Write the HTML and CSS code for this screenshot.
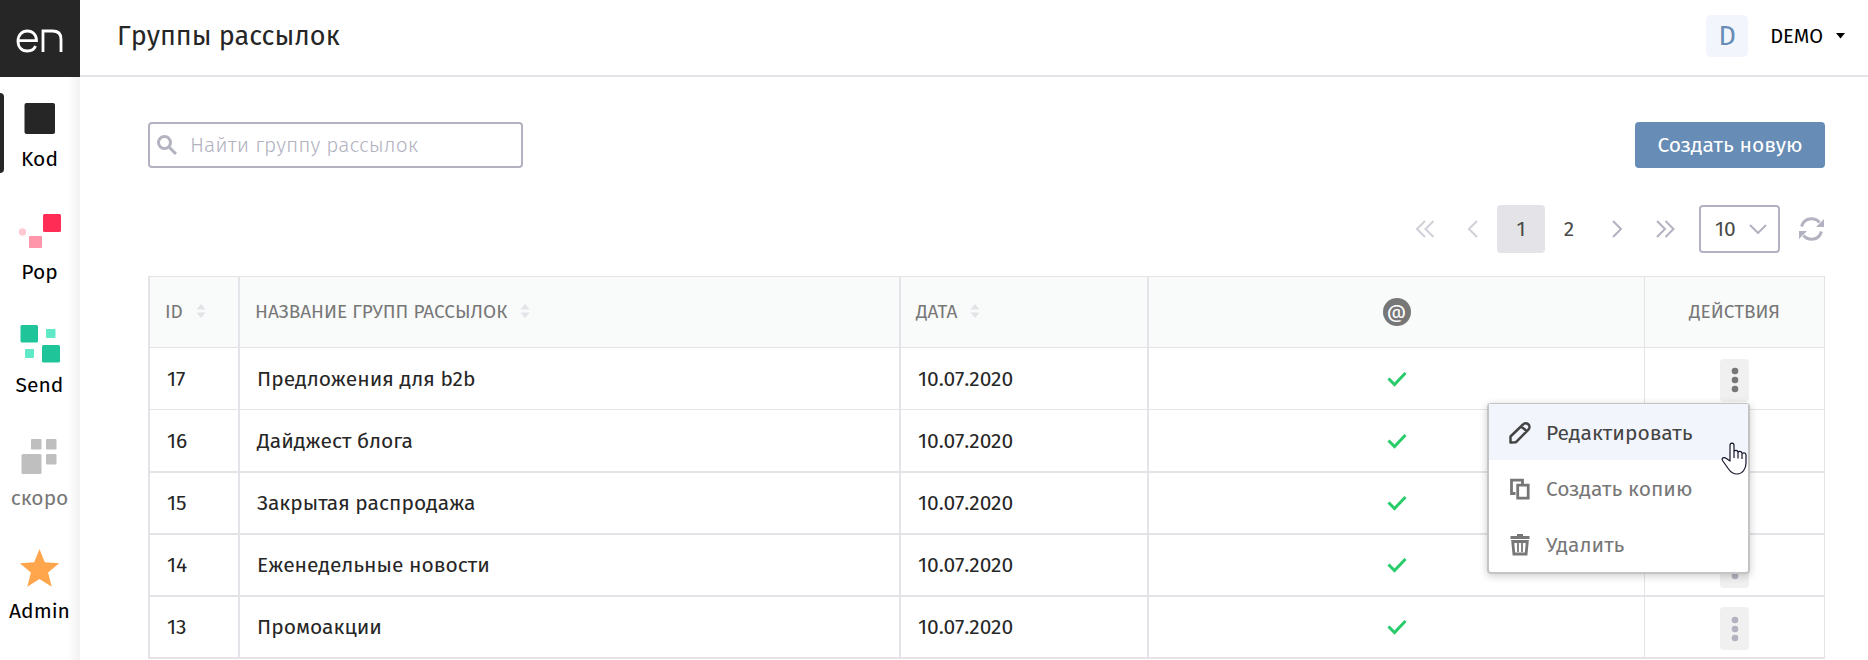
FILE: index.html
```html
<!DOCTYPE html>
<html lang="ru">
<head>
<meta charset="utf-8">
<meta name="viewport" content="width=device-width, initial-scale=1">
<title>Группы рассылок</title>
<link rel="stylesheet" href="styles.css">
</head>
<body>
<svg class="sprite" aria-hidden="true">
  <symbol id="sort" viewBox="0 0 10 14"><path d="M5 0l4.600 5.400H.4zM5 14L.4 8.600h9.200z" fill="currentColor"/></symbol>
  <symbol id="check" viewBox="0 0 20 16"><path d="M1.500 7.500l6 6L18.500 2" fill="none" stroke="currentColor" stroke-width="3"/></symbol>
  <symbol id="dots" viewBox="0 0 8 26"><circle cx="4" cy="4" r="3.300"/><circle cx="4" cy="13" r="3.300"/><circle cx="4" cy="22" r="3.300"/></symbol>
</svg>
<div class="app">
  <aside class="sidebar">
    <a class="logo" href="#" aria-label="en">
      <svg width="48" height="24" viewBox="0 0 48 24" fill="none" stroke="#fff" stroke-width="2.800"><path d="M2 11.700h18.500C20.500 5.500 16.500 2 11.300 2S2 6 2 12s3.600 10 9.300 10c4.200 0 7-1.500 8.200-5M27 23V2h9.500c6 0 8.500 3 8.500 8v13"/></svg>
    </a>
    <nav class="nav">
      <a class="nav-item nav-item-active" href="#">
        <svg width="44" height="50" viewBox="0 0 44 50"><rect x="6.500" y="10" width="30.500" height="31" rx="2" fill="#262626"/></svg>
        <span>Kod</span>
      </a>
      <a class="nav-item" href="#">
        <svg width="44" height="50" viewBox="0 0 44 50"><rect x="25" y="8" width="18" height="18" rx="1.500" fill="#ff2d55"/><rect x="11" y="30" width="13" height="12" rx="1" fill="#ff96aa"/><circle cx="4.500" cy="26" r="3.700" fill="#ffc8d3"/></svg>
        <span>Pop</span>
      </a>
      <a class="nav-item" href="#">
        <svg width="44" height="50" viewBox="0 0 44 50"><g fill="#1fc598"><rect x="2.500" y="6" width="17.500" height="17.500" rx="1.500"/><rect x="24" y="26" width="18" height="17.500" rx="1.500"/></g><g fill="#60e9c6"><rect x="28" y="10" width="9.500" height="9" rx="1"/><rect x="7" y="30" width="9" height="9" rx="1"/></g></svg>
        <span>Send</span>
      </a>
      <a class="nav-item nav-item-soon" href="#">
        <svg width="44" height="50" viewBox="0 0 44 50" fill="#bfbfbf"><rect x="13" y="7" width="10.500" height="10.500" rx="1"/><rect x="28" y="7" width="10.500" height="10.500" rx="1"/><rect x="28" y="22" width="10.500" height="10.500" rx="1"/><rect x="3.500" y="22" width="20" height="20" rx="1.500"/></svg>
        <span>скоро</span>
      </a>
      <a class="nav-item" href="#">
        <svg width="44" height="50" viewBox="0 0 44 50"><path d="M21.500 4l5.300 13.200 14.400 1-11.100 9.200 3.600 14.300-12.200-7.800-12.200 7.800 3.600-14.300-11.100-9.200 14.400-1z" fill="#ffa64d"/></svg>
        <span>Admin</span>
      </a>
    </nav>
  </aside>
  <div class="page">
    <header class="topbar">
      <h1 class="title">Группы рассылок</h1>
      <button class="account" type="button">
        <span class="avatar">D</span>
        <span class="account-name">DEMO</span>
        <svg width="9" height="6" viewBox="0 0 9 6"><path d="M0 0h9L4.500 5.500z"/></svg>
      </button>
    </header>
    <main class="content">
      <div class="toolbar">
        <label class="search">
          <svg width="20" height="20" viewBox="0 0 20 20" fill="none" stroke="#b2b2c1" stroke-width="3"><circle cx="7.500" cy="7.500" r="6"/><path d="M12 12l7 7"/></svg>
          <input class="search-input" type="search" placeholder="Найти группу рассылок" aria-label="Найти группу рассылок">
        </label>
        <button class="create" type="button">Создать новую</button>
      </div>
      <div class="pager">
        <button class="pager-item" type="button" aria-label="В начало" disabled><svg width="20" height="18" viewBox="0 0 20 18"><path d="M10 1L2 9l8 8M18.500 1l-8 8 8 8"/></svg></button>
        <button class="pager-item" type="button" aria-label="Назад" disabled><svg width="20" height="18" viewBox="0 0 20 18"><path d="M14 1L6 9l8 8"/></svg></button>
        <button class="pager-item pager-item-current" type="button">1</button>
        <button class="pager-item" type="button">2</button>
        <button class="pager-item" type="button" aria-label="Вперёд"><svg width="20" height="18" viewBox="0 0 20 18"><path d="M6 1l8 8-8 8"/></svg></button>
        <button class="pager-item" type="button" aria-label="В конец"><svg width="20" height="18" viewBox="0 0 20 18"><path d="M2 1l8 8-8 8M10.500 1l8 8-8 8"/></svg></button>
        <span class="size">
          <select class="size-select" aria-label="Строк на странице"><option>10</option></select>
          <svg class="size-arrow" width="18" height="10" viewBox="0 0 18 10"><path d="M1 1l8 8 8-8"/></svg>
        </span>
        <button class="refresh" type="button" aria-label="Обновить">
          <svg width="26" height="26" viewBox="0 0 26 26"><path d="M2.500 10.500C4 5.500 8 2.800 12.500 2.800c3.300 0 6 1.300 8 3.700M22.500 15.500C21 20.500 17 23.200 12.500 23.200c-3.300 0-6-1.300-8-3.700" fill="none" stroke="currentColor" stroke-width="3"/><path d="M25 3v8h-8zM0 23v-8h8z" fill="currentColor"/></svg>
        </button>
      </div>
      <table class="groups">
        <colgroup><col class="col-id"><col class="col-name"><col class="col-date"><col class="col-mail"><col class="col-actions"></colgroup>
        <thead>
          <tr>
            <th>ID<svg class="sort" width="10" height="14"><use href="#sort"/></svg></th>
            <th>НАЗВАНИЕ ГРУПП РАССЫЛОК<svg class="sort" width="10" height="14"><use href="#sort"/></svg></th>
            <th>ДАТА<svg class="sort" width="10" height="14"><use href="#sort"/></svg></th>
            <th class="center"><span class="mail">@</span></th>
            <th class="center">ДЕЙСТВИЯ</th>
          </tr>
        </thead>
        <tbody>
          <tr>
            <td>17</td><td>Предложения для b2b</td><td>10.07.2020</td>
            <td class="center"><svg class="check" width="20" height="16"><use href="#check"/></svg></td>
            <td class="center">
              <div class="actions">
                <button class="more more-open" type="button" aria-label="Действия"><svg width="8" height="26"><use href="#dots"/></svg></button>
                <div class="menu">
                  <button class="menu-item menu-item-hover" type="button">
                    <svg width="22" height="22" viewBox="0 0 22 22" fill="none" stroke="currentColor" stroke-width="2.500" stroke-linejoin="round"><path d="M1.500 20.500v-6L14 2.500a3.500 3.500 0 0 1 5.500 5L7 20.200zM12.500 4.500l5.500 5"/></svg>
                    Редактировать
                  </button>
                  <button class="menu-item" type="button">
                    <svg width="22" height="22" viewBox="0 0 22 22" fill="none" stroke="currentColor" stroke-width="2.800"><path d="M6.500 15.500h-4V2.200h11v4"/><path d="M8.700 7.200h10.500v13H8.700z"/></svg>
                    Создать копию
                  </button>
                  <button class="menu-item" type="button">
                    <svg width="22" height="22" viewBox="0 0 22 22" fill="none" stroke="currentColor"><path d="M1.500 3.500h19M8 1.500h6" stroke-width="2.800"/><path d="M3.700 7.500h14.600l-1.200 12.500H4.900z" stroke-width="2.800"/><path d="M9 9v9M13 9v9" stroke-width="1.800"/></svg>
                    Удалить
                  </button>
                  <svg class="pointer" width="26" height="33" viewBox="0 0 26 33"><path d="M9 19V3.500C9 .3 13 .3 13 3.500v9-2.300c0-2.600 4-2.400 4 .2v2.100-1.300c0-2.500 4-2.300 4 .2v2-.9c0-2.300 4-2 4 .3V21c0 6-3.500 11-9 11-4 0-6-1.500-8.500-5L1.500 18.500C0 16 3.500 14.800 5 16.300zM13 12v4M17 12.500v4M21 13.400v3.500" fill="#fff" stroke="#14142b" stroke-width="1.200" stroke-linejoin="round"/></svg>
                </div>
              </div>
            </td>
          </tr>
          <tr>
            <td>16</td><td>Дайджест блога</td><td>10.07.2020</td>
            <td class="center"><svg class="check" width="20" height="16"><use href="#check"/></svg></td>
            <td class="center"><div class="actions"><button class="more" type="button" aria-label="Действия"><svg width="8" height="26"><use href="#dots"/></svg></button></div></td>
          </tr>
          <tr>
            <td>15</td><td>Закрытая распродажа</td><td>10.07.2020</td>
            <td class="center"><svg class="check" width="20" height="16"><use href="#check"/></svg></td>
            <td class="center"><div class="actions"><button class="more" type="button" aria-label="Действия"><svg width="8" height="26"><use href="#dots"/></svg></button></div></td>
          </tr>
          <tr>
            <td>14</td><td>Еженедельные новости</td><td>10.07.2020</td>
            <td class="center"><svg class="check" width="20" height="16"><use href="#check"/></svg></td>
            <td class="center"><div class="actions"><button class="more" type="button" aria-label="Действия"><svg width="8" height="26"><use href="#dots"/></svg></button></div></td>
          </tr>
          <tr>
            <td>13</td><td>Промоакции</td><td>10.07.2020</td>
            <td class="center"><svg class="check" width="20" height="16"><use href="#check"/></svg></td>
            <td class="center"><div class="actions"><button class="more" type="button" aria-label="Действия"><svg width="8" height="26"><use href="#dots"/></svg></button></div></td>
          </tr>
        </tbody>
      </table>
    </main>
  </div>
</div>
</body>
</html>
```

FILE: styles.css
```css
* {
  box-sizing: border-box;
}

body {
  margin: 0;
  background: #fff;
  color: #262626;
  font: 21px/26px "Fira Sans", "Noto Sans", sans-serif;
}

button,
input,
select {
  margin: 0;
  padding: 0;
  border: 0;
  background: none;
  color: inherit;
  font: inherit;
}

a {
  color: inherit;
  text-decoration: none;
}

.sprite {
  display: none;
}

.app {
  display: flex;
  min-height: 100vh;
}

/* Sidebar */

.sidebar {
  flex: none;
  width: 80px;
  background: linear-gradient(to left, #f2f2f2, #fff 12px);
}

.logo {
  display: flex;
  align-items: center;
  justify-content: center;
  height: 77px;
  padding-top: 4px;
  background: #262626;
}

.nav {
  display: flex;
  flex-direction: column;
  gap: 33px;
  padding-top: 16px;
}

.nav-item {
  position: relative;
  display: flex;
  flex-direction: column;
  align-items: center;
  gap: 3px;
  height: 80px;
  padding-right: 1px;
  color: #000;
}

.nav-item-active::before {
  content: "";
  position: absolute;
  inset: 0 auto 0 0;
  width: 4px;
  border-radius: 0 4px 4px 0;
  background: #262626;
}

.nav-item-soon {
  color: #777;
}

/* Top bar */

.page {
  flex: 1;
  min-width: 0;
}

.topbar {
  display: flex;
  align-items: center;
  justify-content: space-between;
  height: 77px;
  padding: 0 23px 4px 37px;
  border-bottom: 2px solid #e3e3e8;
}

.title {
  margin: 0;
  font-size: 27px;
  line-height: 36px;
  font-weight: 400;
}

.account {
  display: flex;
  align-items: center;
  color: #000;
}

.avatar {
  width: 42px;
  margin-right: 22px;
  border-radius: 5px;
  background: #f2f6fc;
  color: #678cb5;
  font-size: 27px;
  line-height: 42px;
}

.account-name {
  margin-right: 13px;
  font-size: 20px;
}

/* Search and create */

.content {
  padding: 45px 43px 0 68px;
}

.toolbar {
  display: flex;
  justify-content: space-between;
  margin-bottom: 37px;
}

.search {
  display: flex;
  align-items: center;
  gap: 13px;
  width: 375px;
  height: 46px;
  padding: 0 7px;
  border: 2px solid #b2b2c1;
  border-radius: 4px;
}

.search-input {
  flex: 1;
  min-width: 0;
  outline: 0;
  font-weight: 300;
}

.search-input::placeholder {
  color: #b2b2c1;
  opacity: 1;
}

.create {
  width: 190px;
  height: 46px;
  border-radius: 4px;
  background: #678cb5;
  color: #fff;
}

/* Pager */

.pager {
  display: flex;
  align-items: center;
  justify-content: flex-end;
  margin-bottom: 23px;
  color: #4a4a4a;
}

.pager-item {
  display: flex;
  align-items: center;
  justify-content: center;
  width: 48px;
  height: 48px;
  border-radius: 4px;
}

.pager-item svg,
.size-arrow {
  fill: none;
  stroke: #b2b2c1;
  stroke-width: 2;
}

.pager-item:disabled {
  opacity: 0.6;
}

.pager-item-current {
  background: #e3e3e8;
}

.size {
  display: grid;
  align-items: center;
  margin: 0 19px 0 10px;
}

.size-select,
.size-arrow {
  grid-area: 1 / 1;
}

.size-select {
  width: 81px;
  height: 48px;
  padding-left: 14px;
  border: 2px solid #b2b2c1;
  border-radius: 4px;
  appearance: none;
}

.size-arrow {
  justify-self: end;
  margin-right: 13px;
  pointer-events: none;
}

.refresh {
  display: flex;
  color: #b2b2c1;
}

/* Groups table */

.groups {
  width: 100%;
  border-spacing: 0;
  border-right: 1px solid #e3e3e8;
  table-layout: fixed;
}

.col-id {
  width: 90px;
}

.col-name {
  width: 661px;
}

.col-date {
  width: 248px;
}

.col-actions {
  width: 180px;
}

.groups th,
.groups td {
  border: 0 solid #e3e3e8;
  border-left-width: 2px;
  text-align: left;
}

.groups th {
  height: 72px;
  padding: 0 15px;
  border-top-width: 1px;
  border-bottom-width: 1px;
  background: #f9fbfa;
  color: #777;
  font-size: 19px;
  font-weight: 400;
}

.groups td {
  height: 62px;
  padding: 0 17px;
  border-bottom-width: 2px;
}

.groups tbody tr:first-child td {
  border-bottom-width: 1px;
}

.groups tbody tr:nth-child(2) td {
  height: 63px;
}

.groups th:last-child,
.groups td:last-child {
  border-left-width: 1px;
}

.groups .center {
  padding: 0;
  text-align: center;
}

.sort {
  margin-left: 13px;
  color: #e3e3e8;
}

.mail {
  display: inline-block;
  width: 28px;
  border-radius: 14px;
  background: #777;
  color: #fff;
  line-height: 28px;
}

.check {
  display: block;
  margin: 0 auto;
  color: #29cc6a;
}

.actions {
  position: relative;
  width: 29px;
  margin: 0 auto;
  padding-top: 3px;
}

.more {
  display: flex;
  align-items: center;
  justify-content: center;
  width: 29px;
  height: 43px;
  border-radius: 4px;
  background: #f0f0f0;
  fill: #b2b2c1;
}

.more-open {
  fill: #777;
}

.menu {
  position: absolute;
  z-index: 1;
  top: calc(100% + 1px);
  right: -1px;
  width: 263px;
  border: 1px solid #c4c4c4;
  border-width: 1px 2px 2px;
  border-radius: 4px;
  background: #fff;
  box-shadow: 0 2px 8px rgba(0, 0, 0, 0.2);
}

.menu-item {
  display: flex;
  align-items: center;
  gap: 15px;
  width: 100%;
  height: 56px;
  padding: 3px 18px 0 20px;
  color: #777;
}

.menu-item-hover {
  background: #f2f5fb;
  color: #444;
}

.pointer {
  position: absolute;
  top: 38px;
  right: 1px;
}
```
